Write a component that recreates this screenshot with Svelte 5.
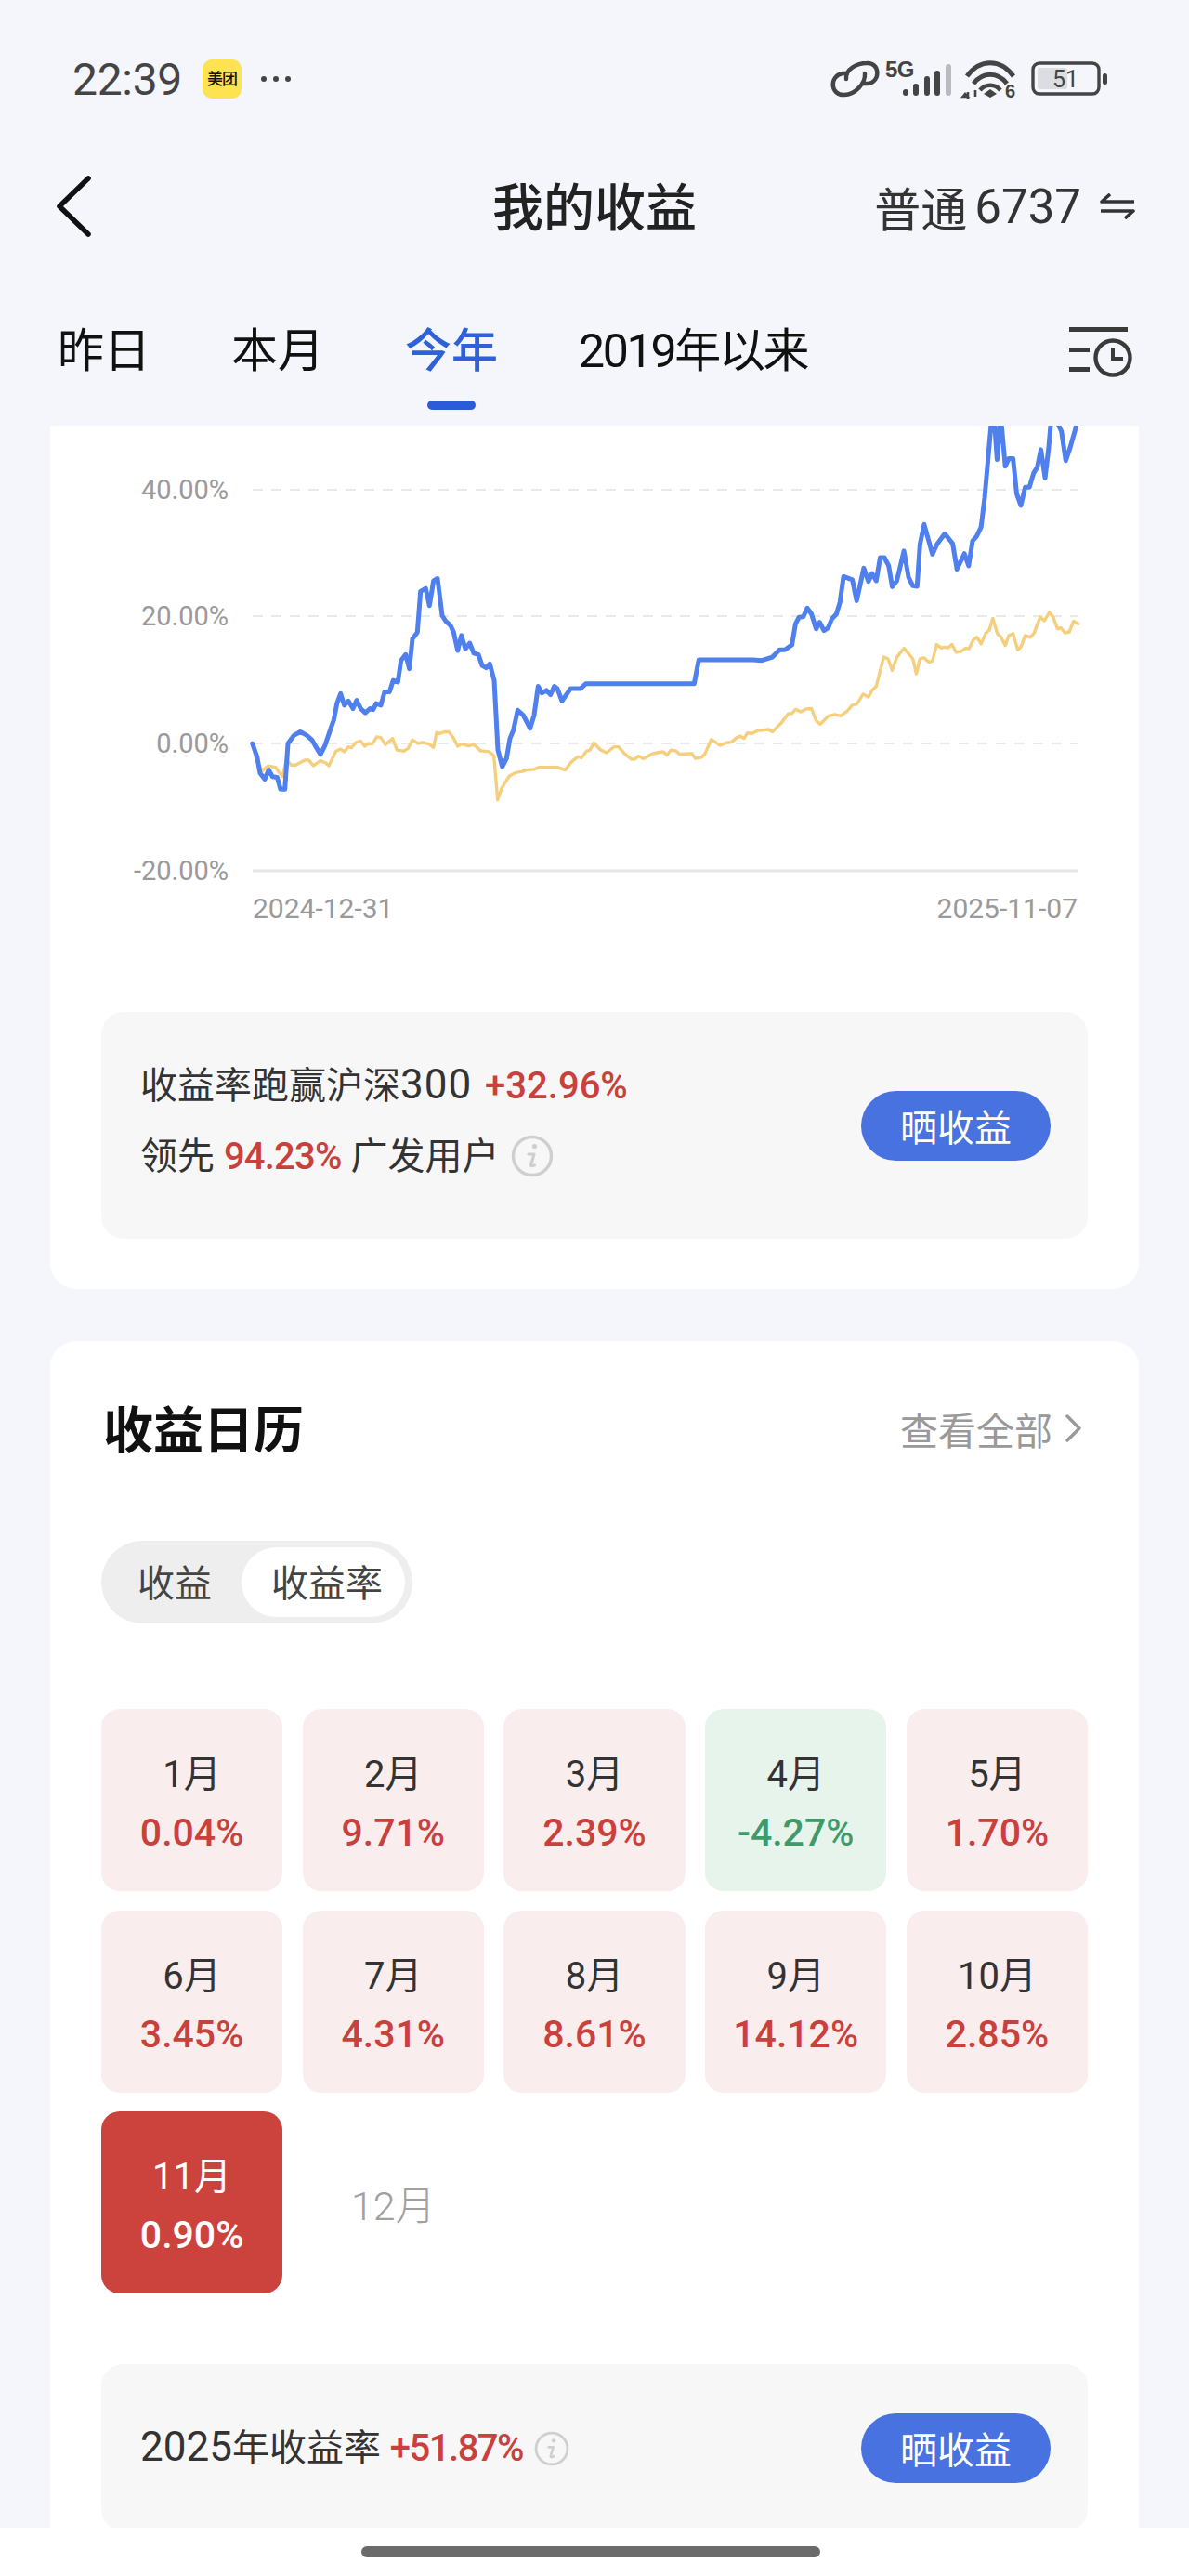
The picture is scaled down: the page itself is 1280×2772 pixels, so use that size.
<script lang="ts">
  const TABS = [
    { id: 'day', label: '昨日' },
    { id: 'month', label: '本月' },
    { id: 'year', label: '今年' },
    { id: 'all', label: '2019年以来' },
  ];

  const MONTHS = [
    { label: '1月', value: '0.04%', kind: 'up' },
    { label: '2月', value: '9.71%', kind: 'up' },
    { label: '3月', value: '2.39%', kind: 'up' },
    { label: '4月', value: '-4.27%', kind: 'down' },
    { label: '5月', value: '1.70%', kind: 'up' },
    { label: '6月', value: '3.45%', kind: 'up' },
    { label: '7月', value: '4.31%', kind: 'up' },
    { label: '8月', value: '8.61%', kind: 'up' },
    { label: '9月', value: '14.12%', kind: 'up' },
    { label: '10月', value: '2.85%', kind: 'up' },
    { label: '11月', value: '0.90%', kind: 'current' },
    { label: '12月', value: '', kind: 'empty' },
  ];

  const GRID = [
    { label: '40.00%', y: 527 },
    { label: '20.00%', y: 663 },
    { label: '0.00%', y: 800 },
  ];

  // samples are stored as traced [x, y]; this brings both halves of the year to chart space
  const toPage = (left: number[][], right: number[][]) =>
    [
      ...left.map(([x, y]) => [100 + x / 3, 450 + y / 2.8]),
      ...right.map(([x, y]) => [600 + x / 2.613, 450 + y / 2.8]),
    ]
      .map(([x, y]) => `${x.toFixed(1)},${y.toFixed(1)}`)
      .join(' ');

  const fund = toPage(
    [[515,980],[530,1020],[540,1070],[555,1088],[568,1060],[580,1080],[595,1082],[606,1118],[620,1118],[630,980],[650,955],[670,945],[690,955],[708,970],[720,990],[735,1013],[750,985],[770,930],[778,910],[788,860],[800,830],[812,865],[825,852],[840,875],[852,850],[865,875],[880,888],[895,875],[905,878],[915,860],[930,865],[942,825],[958,825],[970,790],[985,795],[995,730],[1010,712],[1022,755],[1032,665],[1048,645],[1058,522],[1075,513],[1087,565],[1100,490],[1113,483],[1128,595],[1140,612],[1155,625],[1165,645],[1178,700],[1190,655],[1203,695],[1217,678],[1230,708],[1245,712],[1257,745],[1270,752],[1282,740],[1296,790],[1308,1000],[1322,1050],[1336,1025],[1347,965],[1358,940],[1372,880],[1390,895],[1412,935],[1425,895],[1438,808],[1450,828],[1465,820],[1478,833],[1490,808]],
    [[0,815],[13,852],[37,815],[65,815],[80,800],[385,800],[398,728],[550,728],[575,730],[605,720],[625,698],[640,698],[660,683],[670,620],[680,600],[692,598],[703,572],[715,590],[728,635],[738,615],[750,640],[762,632],[772,605],[785,590],[795,555],[805,477],[830,487],[842,550],[862,452],[875,492],[885,468],[897,490],[908,420],[920,420],[932,445],[942,508],[955,490],[975,400],[988,480],[1000,505],[1012,507],[1020,380],[1032,320],[1055,410],[1068,380],[1090,348],[1112,378],[1124,455],[1145,408],[1157,445],[1168,370],[1180,355],[1192,328],[1202,240],[1220,22],[1228,-10],[1237,125],[1247,-10],[1260,145],[1270,122],[1282,122],[1292,228],[1304,263],[1316,208],[1328,208],[1340,165],[1350,148],[1360,95],[1372,180],[1382,90],[1390,-10],[1405,10],[1418,40],[1430,128],[1442,90],[1458,30],[1465,-10]]
  );

  const index = toPage(
    [[515,980],[525,1020],[535,1045],[548,1062],[565,1048],[590,1052],[600,1065],[612,1080],[625,1030],[640,1045],[655,1045],[685,1030],[697,1030],[712,1047],[735,1032],[750,1038],[762,1047],[785,1003],[800,997],[812,1005],[825,990],[835,993],[850,977],[865,973],[878,988],[890,980],[902,982],[917,960],[930,962],[945,983],[968,965],[982,1000],[1005,1003],[1018,995],[1032,970],[1050,980],[1065,977],[1085,982],[1100,992],[1110,947],[1120,950],[1135,945],[1150,945],[1165,965],[1178,988],[1190,982],[1215,987],[1230,983],[1252,1002],[1280,1005],[1295,1018],[1307,1150],[1320,1115],[1345,1078],[1365,1068],[1385,1065],[1400,1060],[1425,1058],[1440,1052]],
    [[0,1052],[22,1060],[40,1035],[58,1020],[68,1023],[82,1003],[92,1000],[103,978],[120,998],[138,1008],[160,990],[172,990],[190,1012],[208,1027],[218,1028],[228,1018],[242,1026],[265,1012],[280,1008],[298,1005],[308,1015],[320,1000],[332,1002],[345,1013],[378,1010],[388,1025],[405,1022],[415,1012],[433,968],[458,986],[475,978],[490,976],[505,962],[515,958],[525,965],[535,948],[548,950],[562,942],[595,938],[605,945],[630,918],[650,890],[660,890],[670,877],[685,885],[700,876],[715,875],[728,912],[740,922],[762,898],[780,893],[797,897],[815,883],[830,864],[842,862],[860,832],[875,840],[885,820],[897,808],[918,720],[930,725],[942,760],[955,720],[975,693],[1000,725],[1010,770],[1020,725],[1032,722],[1045,735],[1055,732],[1067,682],[1080,692],[1090,690],[1100,692],[1110,682],[1122,705],[1135,703],[1148,693],[1158,695],[1170,668],[1180,660],[1192,680],[1205,648],[1215,638],[1225,603],[1238,650],[1248,660],[1260,685],[1270,655],[1282,650],[1295,698],[1305,688],[1316,655],[1330,660],[1340,650],[1358,600],[1370,610],[1384,585],[1395,600],[1407,635],[1417,632],[1428,647],[1440,644],[1452,612],[1465,620]]
  );
</script>

{#snippet infoIcon(cls)}
  <svg class={cls} viewBox="0 0 46 46" fill="none" aria-hidden="true">
    <circle cx="23" cy="23" r="20.5" stroke="#cfcfcf" stroke-width="3.4" />
    <circle cx="25.5" cy="12.5" r="2.6" fill="#cfcfcf" />
    <path d="M19 21h6l-3.4 11.5c-.4 1.4.9 1.8 3.9.4" stroke="#cfcfcf" stroke-width="3.2" stroke-linecap="round" stroke-linejoin="round" />
  </svg>
{/snippet}

<div class="screen">
  <header class="top">
    <div class="status">
      <div class="status-left">
        <span class="clock">22:39</span>
        <span class="app-badge">美团</span>
        <svg class="more" viewBox="0 0 34 8" aria-hidden="true">
          <circle cx="4" cy="4" r="3" /><circle cx="17" cy="4" r="3" /><circle cx="30" cy="4" r="3" />
        </svg>
      </div>
      <svg class="status-icons" viewBox="896 60 300 50" aria-hidden="true">
        <!-- chain -->
        <g transform="translate(2 0)">
          <path d="M911 85c-1-11 12-17 22-17 15-1 15 21 1 22h-6M931 79c1 11-11 23-22 23-15 1-17-20-2-23h5" fill="none" stroke="#444" stroke-width="4.4" stroke-linecap="round" />
        </g>
        <text x="955" y="83" class="net">5G</text>
        <!-- signal bars -->
        <rect x="974" y="96" width="6" height="7" rx="3" fill="#444" />
        <rect x="985" y="90" width="6" height="13" rx="3" fill="#444" />
        <rect x="997" y="82" width="6" height="21" rx="3" fill="#444" />
        <rect x="1008" y="76" width="6" height="27" rx="3" fill="#444" />
        <rect x="1020" y="69" width="6" height="34" rx="3" fill="#b9bbbf" />
        <!-- wifi -->
        <g fill="none" stroke="#444" stroke-linecap="butt">
          <path d="M1043 82c14-19 36-19 50 0" stroke-width="5" />
          <path d="M1050 90c10-13 26-13 36 0" stroke-width="5" />
          <path d="M1057 97c6-7 16-7 22 0" stroke-width="4.6" />
        </g>
        <path d="M1068 96l7 5-7 4-7-4z" fill="#444" />
        <path d="M1044 99v7M1041 101l-2.4 3h5zM1052 97v7" stroke="#444" stroke-width="2.6" fill="none" />
        <text x="1084" y="105" class="wifi-band">6</text>
        <!-- battery -->
        <rect x="1114" y="68" width="71" height="33" rx="7" fill="none" stroke="#444" stroke-width="3.4" />
        <rect x="1119" y="73" width="32" height="23" rx="3" fill="#dcdde1" />
        <rect x="1189" y="79" width="5" height="12" rx="2.5" fill="#444" />
        <text x="1135" y="94" class="level">51</text>
      </svg>
    </div>

    <nav class="titlebar">
      <svg class="back" viewBox="0 0 40 66" fill="none" aria-hidden="true">
        <path d="M35 3 4 33l31 30" stroke="#111" stroke-width="5.6" stroke-linecap="round" stroke-linejoin="round" />
      </svg>
      <h1>我的收益</h1>
      <div class="account">
        <span>普通</span><span class="account-no">6737</span>
        <svg viewBox="0 0 38 28" fill="none" aria-hidden="true">
          <path d="M11 1 2 9h35M27 27l9-8H1" stroke="#333" stroke-width="3.6" stroke-linejoin="round" />
        </svg>
      </div>
    </nav>

    <div class="tabs">
      {#each TABS as tab}
        <div class="tab" class:active={tab.id === 'year'} class:tight={tab.id === 'all'}>{tab.label}</div>
      {/each}
      <svg class="history" viewBox="0 0 70 56" fill="none" aria-hidden="true">
        <path d="M1 3.5h63M1 25.5h22M1 46.5h22" stroke="#3a3a3a" stroke-width="5" />
        <circle cx="48" cy="34" r="18.5" stroke="#3a3a3a" stroke-width="4.4" />
        <path d="M48 23v12h11" stroke="#3a3a3a" stroke-width="4" />
      </svg>
    </div>
  </header>

  <main class="scroller">
    <section class="card chart-card">
      <svg class="chart" viewBox="54 458 1172 542" aria-label="收益走势">
        {#each GRID as line}
          <line x1="272" x2="1160" y1={line.y} y2={line.y} class="grid" />
          <text x="246" y={line.y + 10} class="axis" text-anchor="end">{line.label}</text>
        {/each}
        <line x1="272" x2="1160" y1="937" y2="937" class="baseline" />
        <text x="246" y="947" class="axis" text-anchor="end">-20.00%</text>
        <text x="272" y="988" class="axis date">2024-12-31</text>
        <text x="1160" y="988" class="axis date" text-anchor="end">2025-11-07</text>
        <polyline points={index} class="line index-line" />
        <polyline points={fund} class="line fund-line" />
      </svg>

      <div class="summary tall">
        <div class="summary-text">
          <p>收益率跑赢沪深<span class="num">300</span> <b class="gain">+32.96%</b></p>
          <p class="second">领先 <b class="gain">94.23%</b> 广发用户{@render infoIcon('info')}</p>
        </div>
        <button class="share">晒收益</button>
      </div>
    </section>

    <section class="card calendar-card">
      <div class="card-head">
        <h2>收益日历</h2>
        <div class="see-all">
          查看全部
          <svg viewBox="0 0 18 30" fill="none" aria-hidden="true">
            <path d="M2 2l13 13L2 28" stroke="#999" stroke-width="3.4" stroke-linecap="round" stroke-linejoin="round" />
          </svg>
        </div>
      </div>

      <div class="toggle">
        <span class="opt">收益</span>
        <span class="opt on">收益率</span>
      </div>

      <div class="months">
        {#each MONTHS as m}
          <div class="month {m.kind}">
            <span class="m-label">{m.label}</span>
            {#if m.value}<span class="m-value">{m.value}</span>{/if}
          </div>
        {/each}
      </div>

      <div class="summary short">
        <div class="summary-text">
          <p><span class="num">2025</span>年收益率 <b class="gain">+51.87%</b>{@render infoIcon('info small')}</p>
        </div>
        <button class="share">晒收益</button>
      </div>
    </section>
  </main>

  <footer class="home-bar"><span></span></footer>
</div>

<style>
  :global(body) { margin: 0; background: #f4f6fc; }

  .screen {
    display: flex; flex-direction: column;
    width: 1280px; height: 2772px; overflow: hidden;
    background: #f4f6fc; color: #333;
    font-family: Roboto, "Noto Sans CJK SC", sans-serif;
  }

  .top { flex-shrink: 0; height: 458px; display: flex; flex-direction: column; }

  .status {
    height: 170px; padding: 0 86px 0 78px; flex-shrink: 0;
    display: flex; align-items: center; justify-content: space-between;
  }
  .status-left { display: flex; align-items: center; }
  .clock { font-size: 48px; color: #444; width: 140px; letter-spacing: -.3px; }
  .app-badge {
    width: 42px; height: 42px; border-radius: 10px; background: #fde352;
    color: #111; font-size: 17px; font-weight: 500; line-height: 42px; text-align: center;
    letter-spacing: -1px; white-space: nowrap; overflow: hidden;
  }
  .more { width: 34px; height: 8px; margin-left: 20px; fill: #444; }
  .status-icons { width: 300px; height: 50px; }
  .net { font: 700 24px "Liberation Sans", sans-serif; fill: #444; letter-spacing: -.5px; }
  .wifi-band { font: 700 20px "Liberation Sans", sans-serif; fill: #444; }
  .level { font: 400 25px Roboto, sans-serif; fill: #444; }

  .titlebar {
    position: relative; height: 104px; flex-shrink: 0;
    display: flex; align-items: center; justify-content: space-between;
    padding: 0 58px 0 60px;
  }
  .back { width: 40px; height: 66px; }
  h1 {
    position: absolute; left: 0; right: 0; top: 22px; margin: 0; text-align: center;
    font-size: 55px; font-weight: 500; color: #222; pointer-events: none; line-height: 64px;
  }
  .account { display: flex; align-items: center; font-size: 50px; color: #333; }
  .account-no { margin-left: 8px; font-size: 51px; font-weight: 400; }
  .account svg { width: 38px; height: 28px; margin-left: 20px; }

  .tabs { position: relative; display: flex; gap: 87px; padding: 70px 0 0 62px; }
  .tab { position: relative; font-size: 50px; line-height: 68px; color: #111; white-space: nowrap; }
  .tab.tight { letter-spacing: -2.3px; }
  .tab.active { color: #2f62d9; font-weight: 500; }
  .tab.active::after {
    content: ''; position: absolute; left: 50%; top: 87px; transform: translateX(-50%);
    width: 52px; height: 10px; border-radius: 5px; background: #2b5bd7;
  }
  .history { position: absolute; right: 60px; top: 77px; width: 70px; height: 56px; }

  .scroller { flex: 1; min-height: 0; overflow: hidden; padding: 0 54px; }
  .card { background: #fff; border-radius: 28px; padding: 0 55px; }
  .chart-card { border-radius: 0 0 28px 28px; padding-bottom: 54px; }
  .chart { display: block; width: 1172px; height: 542px; margin: 0 -55px 89px; overflow: hidden; }
  .grid { stroke: #e9e9e9; stroke-width: 2; stroke-dasharray: 11 9; }
  .baseline { stroke: #e6e6e6; stroke-width: 3; }
  .axis { font: 400 29px Roboto, sans-serif; fill: #9a9a9a; }
  .date { font-size: 30px; }
  .line { fill: none; stroke-linejoin: round; stroke-linecap: round; }
  .fund-line { stroke: #4f80ee; stroke-width: 5; }
  .index-line { stroke: #f5cf7d; stroke-width: 3.4; }

  .summary {
    background: #f7f7f7; border-radius: 24px; box-sizing: border-box;
    display: flex; align-items: center; justify-content: space-between;
    padding: 0 40px 0 42px; font-size: 40px; color: #333;
  }
  .summary.tall { height: 244px; }
  .summary.tall .summary-text { margin-top: -10px; }
  .summary.short { height: 180px; margin-top: 76px; }
  .summary-text p { margin: 0; white-space: nowrap; line-height: 56px; }
  .summary-text .second { margin-top: 20px; }
  .num { font-size: 44px; font-weight: 400; }
  .tall .num { letter-spacing: 1px; margin-right: 4px; }
  .gain { color: #c9413d; font-weight: 500; }
  .second .gain { letter-spacing: -.8px; }
  .short .gain { letter-spacing: -1.5px; }
  .info { width: 46px; height: 46px; margin-left: 12px; vertical-align: -9px; }
  .info.small { width: 38px; height: 38px; margin-left: 12px; vertical-align: -6px; }
  .share {
    width: 204px; height: 75px; border: none; border-radius: 38px; padding: 0;
    background: #4872df; color: #fff; font: inherit; font-size: 40px;
  }

  .calendar-card { margin-top: 56px; padding-top: 54px; padding-bottom: 40px; }
  .card-head { display: flex; align-items: center; justify-content: space-between; height: 80px; padding-right: 6px; }
  h2 { margin: -4px 0 0 2px; font-size: 54px; font-weight: 700; color: #111; }
  .see-all { display: flex; align-items: center; font-size: 41px; color: #999; }
  .see-all svg { width: 18px; height: 30px; margin-left: 14px; }

  .toggle {
    display: inline-flex; align-items: center; box-sizing: border-box;
    height: 89px; margin-top: 81px; padding: 0 8px 0 39px;
    background: #eee; border-radius: 45px; font-size: 40px; color: #444;
  }
  .opt { height: 75px; line-height: 79px; }
  .opt.on { margin-left: 32px; padding: 0 24px 0 32px; background: #fff; border-radius: 38px; }

  .months {
    display: grid; grid-template-columns: repeat(5, 1fr);
    gap: 20.5px 21.5px; margin-top: 92px;
  }
  .month {
    height: 196px; border-radius: 20px; box-sizing: border-box; padding-top: 8px;
    display: flex; flex-direction: column; align-items: center; justify-content: center;
    font-size: 40px; line-height: 63px; color: #333;
  }
  .m-value { font-size: 41px; font-weight: 500; }
  .month.up { background: #f9eded; }
  .month.up .m-value { color: #c9413d; }
  .month.down { background: #e6f4ec; }
  .month.down .m-value { color: #3f9a6a; }
  .month.current { background: #cc433e; color: #fff; }
  .month.empty { color: #a0a0a0; font-size: 43px; font-weight: 300; }

  .home-bar { flex-shrink: 0; height: 52px; background: #fff; display: flex; justify-content: center; padding: 20px 8px 0 0; box-sizing: border-box; }
  .home-bar span { width: 494px; height: 12px; border-radius: 6px; background: #6b6b6b; }
</style>
